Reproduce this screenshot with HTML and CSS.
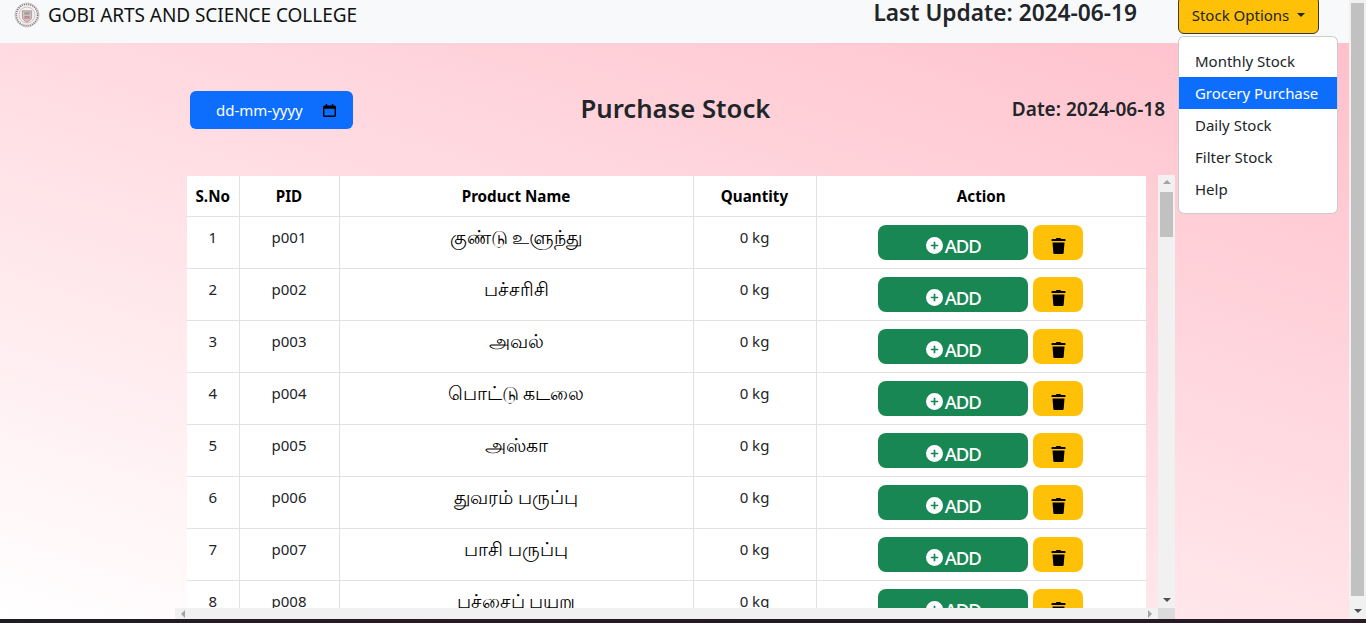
FILE: index.html
```html
<!DOCTYPE html>
<html lang="en">
<head>
<meta charset="utf-8">
<title>Purchase Stock</title>
<link rel="stylesheet" href="styles.css">
</head>
<body>
<div class="app">
  <div class="window">
    <div class="page">
      <nav class="navbar">
        <div class="brand">
          <svg class="logo" viewBox="0 0 28 28" aria-hidden="true">
            <circle cx="14" cy="14" r="13" fill="#f6f2f2" stroke="#cfc8ca" stroke-width="1"/>
            <circle cx="14" cy="14" r="11.500" fill="none" stroke="#80757b" stroke-width="1.800" stroke-dasharray="1.200 1.100"/>
            <circle cx="14" cy="14" r="8.600" fill="#f7f1ef" stroke="#b5aaae" stroke-width=".7"/>
            <path d="M9 9.500h10v6.500c0 3-2.500 4.500-5 5.500-2.500-1-5-2.500-5-5.500z" fill="#d8bfc2" stroke="#8d7c81" stroke-width=".7"/>
            <path d="M11 11h6v2.500h-6z" fill="#93a38c"/>
            <path d="M11 15h6v3h-6z" fill="#b98f97"/>
          </svg>
          <span class="brand-name">GOBI ARTS AND SCIENCE COLLEGE</span>
        </div>
        <div class="nav-right">
          <span class="last-update">Last Update: 2024-06-19</span>
          <div class="dropdown">
            <button class="dropdown-toggle" type="button">Stock Options<span class="caret"></span></button>
            <ul class="dropdown-menu">
              <li class="dropdown-item">Monthly Stock</li>
              <li class="dropdown-item active">Grocery Purchase</li>
              <li class="dropdown-item">Daily Stock</li>
              <li class="dropdown-item">Filter Stock</li>
              <li class="dropdown-item">Help</li>
            </ul>
          </div>
        </div>
      </nav>
      <main class="main">
        <header class="head-row">
          <div class="date-input"><span>dd-mm-yyyy</span>
            <svg class="cal" viewBox="0 0 14 14" aria-hidden="true"><path d="M3 0v1.500H1.800C.8 1.500 0 2.300 0 3.300v8.900c0 1 .8 1.800 1.800 1.800h10.400c1 0 1.800-.8 1.800-1.800V3.300c0-1-.8-1.800-1.800-1.800H11V0H9.500v1.500h-5V0zM1.500 5h11v7.200c0 .2-.1.300-.3.300H1.800c-.2 0-.3-.1-.3-.3z" fill="#000"/></svg>
          </div>
          <h1 class="title">Purchase Stock</h1>
          <div class="date-label">Date: 2024-06-18</div>
        </header>
        <section class="scroller">
          <div class="scroller-top">
            <div class="table-area">
              <table class="stock">
                <thead>
                  <tr><th class="c-sno">S.No</th><th class="c-pid">PID</th><th class="c-name">Product Name</th><th class="c-qty">Quantity</th><th class="c-act">Action</th></tr>
                </thead>
                <tbody id="rows"></tbody>
              </table>
            </div>
            <div class="vbar inner">
              <span class="arrow up"></span>
              <div class="vtrack"><div class="vthumb"></div></div>
              <span class="arrow down"></span>
            </div>
          </div>
          <div class="hbar">
            <div class="htrack"><span class="arrow left"></span><span class="arrow right"></span></div>
            <div class="corner"></div>
          </div>
        </section>
      </main>
    </div>
    <div class="vbar outer">
      <span class="arrow up"></span>
      <div class="vtrack"><div class="vthumb"></div></div>
      <span class="arrow down"></span>
    </div>
  </div>
  <div class="taskbar"></div>
</div>
<script src="app.js"></script>
</body>
</html>
```
FILE: styles.css
```css
* { box-sizing: border-box; }
html, body { margin: 0; height: 100%; overflow: hidden; }
body { font-family: "Noto Sans", "Open Sans", "Noto Sans CJK SC", sans-serif; font-size: 16px; color: #212529; }
.app { display: flex; flex-direction: column; height: 623px; }
.window { display: flex; height: 619px; }
.taskbar { height: 4px; background: linear-gradient(90deg, #1d1d22, #2a1a22 30%, #201a22 60%, #2b1a26); }
.page { width: 1349px; display: flex; flex-direction: column; }
.navbar { height: 43px; background: #f8f9fa; display: flex; justify-content: space-between; padding-left: 14px; position: relative; z-index: 2; }
.brand { display: flex; align-items: flex-start; padding-top: 2px; }
.logo { width: 26px; height: 26px; margin-right: 8px; }
.brand-name { font-size: 19px; line-height: 26px; color: #111; letter-spacing: -.05px; }
.nav-right { display: flex; align-items: flex-start; }
.last-update { font-size: 22.700px; font-weight: 600; line-height: 24px; margin: 1px 41px 0 0; white-space: nowrap; }
.dropdown { position: relative; margin-right: 30px; margin-top: -4px; }
.dropdown-toggle { width: 141px; height: 38px; padding: 0; background: #ffc107; border: 1px solid #3a3a30; border-radius: 6px; font: inherit; font-size: 15px; color: #212529; display: flex; align-items: center; justify-content: center; }
.caret { margin-left: 8px; border-top: 4.800px solid #212529; border-left: 4.800px solid transparent; border-right: 4.800px solid transparent; }
.dropdown-menu { position: absolute; top: 40px; left: 0; width: 160px; margin: 0; padding: 8px 0; list-style: none; background: #fff; border: 1px solid rgba(0,0,0,.2); border-radius: 6px; }
.dropdown-item { height: 32px; line-height: 32px; padding-left: 16px; font-size: 15px; color: #212529; }
.dropdown-item.active { background: #0d6efd; color: #fff; letter-spacing: -.05px; }
.main { flex: 1; min-height: 0; padding: 48px 0 0 175px; background: linear-gradient(18deg, #fff 0%, #ffc0cb 100%); display: flex; flex-direction: column; }
.head-row { display: flex; align-items: center; height: 38px; padding-left: 15px; margin-bottom: 46px; width: 990px; }
.date-input { width: 163px; height: 38px; background: #0d6efd; color: #fff; border-radius: 6px; display: flex; align-items: center; padding: 0 17px 0 26px; justify-content: space-between; font-size: 15px; flex: none; }
.cal { width: 13px; height: 13px; }
.title { flex: 1; margin: 0 0 2px; padding-right: 14px; text-align: center; font-size: 25.700px; line-height: 34px; font-weight: 600; color: #212529; }
.date-label { flex: none; font-size: 19px; line-height: 34px; margin-bottom: 3px; font-weight: 600; white-space: nowrap; text-align: right; }
.scroller { flex: 1; min-height: 0; width: 1000px; display: flex; flex-direction: column; }
.scroller-top { flex: 1; min-height: 0; display: flex; }
.table-area { width: 983px; overflow: hidden; padding: 1px 12px 0; }
.stock { width: 959px; table-layout: fixed; border-collapse: collapse; background: #fff; }
.stock th, .stock td { border: 1px solid #dee2e6; text-align: center; color: #000; }
.stock tr:first-child th { border-top: 0; }
.stock th:first-child, .stock td:first-child { border-left: 0; }
.stock th:last-child, .stock td:last-child { border-right: 0; }
.stock th { height: 40px; font-size: 15.200px; font-weight: 700; }
.stock td { height: 52px; font-size: 15px; padding: 8px 0 0; vertical-align: top; line-height: 24px; color: #212529; }
.c-sno { width: 52px; } .c-pid { width: 100px; } .c-name { width: 354px; } .c-qty { width: 123px; } .c-act { width: 330px; }
.stock td.ta { font-size: 18.700px; color: #000; }
.actions { display: flex; justify-content: center; gap: 5px; padding-right: 2px; }
.btn { height: 35px; border-radius: 8px; display: flex; align-items: center; justify-content: center; }
.btn-add { width: 150px; padding-top: 7px; background: #198754; color: #fff; font-size: 18.500px; font-weight: 500; letter-spacing: -1px; }
.btn-add svg { width: 17px; height: 17px; margin: -1px 2px 0 1px; }
.btn-del { width: 50px; padding-top: 7px; background: #ffc107; }
.btn-del svg { width: 15px; height: 16px; margin-left: 1px; }
.vbar { width: 17px; background: #f1f1f1; display: flex; flex-direction: column; align-items: center; flex: none; padding: 0 2px; }
.vbar .vtrack { flex: 1; width: 100%; position: relative; }
.vbar.outer { height: 619px; padding-top: 3px; }
.vbar.outer .vtrack { margin-top: -3px; padding-top: 3px; }
.vbar.outer .vthumb { height: 593px; }
.vbar.inner .vthumb { height: 45px; margin-top: 1px; }
.vbar.inner { padding-top: 5px; }
.vthumb { width: 100%; background: #c1c1c1; }
.arrow { display: block; width: 0; height: 0; flex: none; }
.arrow.up { border-left: 4px solid transparent; border-right: 4px solid transparent; border-bottom: 4px solid #a3a3a3; margin-bottom: 7px; }
.arrow.down { border-left: 4px solid transparent; border-right: 4px solid transparent; border-top: 4px solid #505050; margin: 7px 0 6px; }
.vbar.outer .arrow.up { display: none; }
.hbar { height: 11px; display: flex; flex: none; }
.htrack { flex: 1; background: #f1f1f1; display: flex; justify-content: space-between; align-items: center; padding: 0 6px 0 6px; }
.arrow.left { border-top: 4px solid transparent; border-bottom: 4px solid transparent; border-right: 4px solid #a3a3a3; }
.arrow.right { border-top: 4px solid transparent; border-bottom: 4px solid transparent; border-left: 4px solid #a3a3a3; }
.corner { width: 17px; background: #dcdcdc; }
```
FILE: app.js
```js
var items = [
  ["p001", "குண்டு உளுந்து"], ["p002", "பச்சரிசி"], ["p003", "அவல்"], ["p004", "பொட்டு கடலை"],
  ["p005", "அஸ்கா"], ["p006", "துவரம் பருப்பு"], ["p007", "பாசி பருப்பு"], ["p008", "பச்சைப் பயறு"]
];
var plus = '<svg viewBox="0 0 16 16"><path fill="#fff" d="M16 8A8 8 0 1 1 0 8a8 8 0 0 1 16 0zM8.800 4.500H7.200v2.700H4.500v1.600h2.700v2.700h1.600V8.800h2.700V7.200H8.800z"/></svg>';
var trash = '<svg viewBox="0 0 14 16"><path fill="#000" d="M5 0h4l.6 1H13c.6 0 1 .4 1 1v1H0V2c0-.6.4-1 1-1h3.400zM1 4.500h12l-.8 10.200c-.1.700-.6 1.300-1.400 1.300H3.200c-.8 0-1.300-.6-1.400-1.300z"/></svg>';
document.getElementById("rows").innerHTML = items.map(function (it, i) {
  return "<tr><td>" + (i + 1) + "</td><td>" + it[0] + "</td><td class=\"ta\">" + it[1] + "</td><td>0 kg</td><td><div class=\"actions\">" +
    "<div class=\"btn btn-add\">" + plus + "ADD</div><div class=\"btn btn-del\">" + trash + "</div></div></td></tr>";
}).join("");
```
